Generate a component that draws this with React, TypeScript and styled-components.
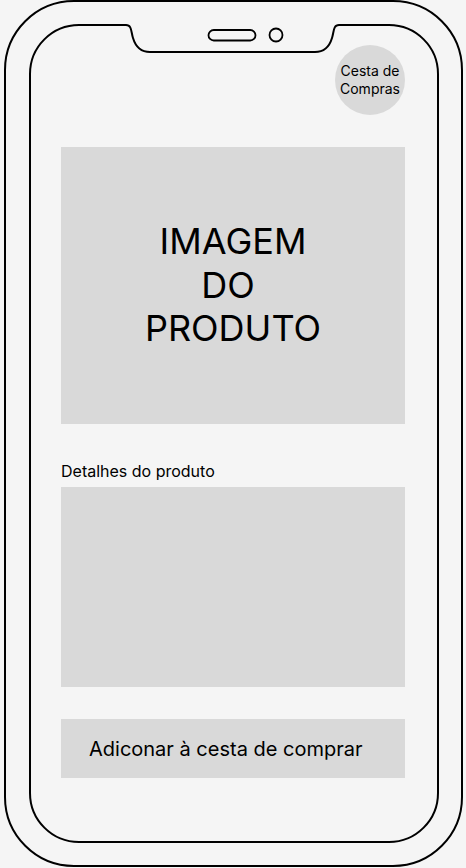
import React from 'react';
import styled, { createGlobalStyle } from 'styled-components';

const GlobalStyle = createGlobalStyle`
  html, body {
    margin: 0;
    padding: 0;
    background: #f5f5f5;
  }
  body {
    font-family: Inter, "Noto Sans", "Liberation Sans", sans-serif;
    color: #000000;
  }
`;

const Screen = styled.div`
  position: relative;
  width: 466px;
  height: 868px;
  overflow: hidden;
`;

const PhoneBody = styled.div`
  box-sizing: border-box;
  width: 459px;
  height: 867px;
  margin-left: 4px;
  border: 2px solid #000;
  border-radius: 70px;
  padding: 22px 0 0 23px;
`;

const Display = styled.div`
  box-sizing: border-box;
  width: 410px;
  height: 819px;
  border: 2px solid #000;
  border-radius: 50px;
  padding: 19px 32px 0 30px;
  display: flex;
  flex-direction: column;
`;

const Notch = styled.svg`
  position: absolute;
  left: 0;
  top: 0;
  pointer-events: none;
`;

const Header = styled.div`
  display: flex;
  justify-content: flex-end;
`;

const CartBadge = styled.div`
  width: 70px;
  height: 70px;
  border-radius: 50%;
  background: #d9d9d9;
  display: flex;
  align-items: center;
  justify-content: center;
  text-align: center;
  font-size: 14px;
  line-height: 18px;
`;

const Block = styled.div<{ $height: number; $gap: number }>`
  height: ${(p) => p.$height}px;
  margin-top: ${(p) => p.$gap}px;
  background: #d9d9d9;
`;

const ImageBox = styled(Block)`
  display: flex;
  align-items: center;
  justify-content: center;
  text-align: center;
  font-size: 36px;
  line-height: 43.5px;
  white-space: pre;
`;

const Label = styled.div`
  margin-top: 38px;
  font-size: 16px;
  line-height: 18px;
`;

const AddButton = styled(Block)`
  display: flex;
  align-items: center;
  padding-left: 28px;
  font-size: 20px;
`;

export default function App() {
  return (
    <>
      <GlobalStyle />
      <Screen>
        <PhoneBody>
          <Display>
            <Header>
              <CartBadge>
                Cesta de
                <br />
                Compras
              </CartBadge>
            </Header>
            <ImageBox $height={277} $gap={32}>
              {'IMAGEM\nDO \nPRODUTO'}
            </ImageBox>
            <Label>Detalhes do produto</Label>
            <Block $height={200} $gap={7} />
            <AddButton $height={59} $gap={32}>
              Adiconar à cesta de comprar
            </AddButton>
          </Display>
        </PhoneBody>
        <Notch width="466" height="60" viewBox="0 0 466 60">
          <rect x="122" y="22" width="222" height="4" fill="#f5f5f5" />
          <path
            d="M118 25 H126 C132 25 131 32 133 38 C136 48 142 52 150 52 H315 C323 52 329 48 332 38 C334 32 333 25 339 25 H346"
            fill="none"
            stroke="#000"
            strokeWidth="2"
          />
          <rect x="208.5" y="30" width="47" height="10.5" rx="5.25" fill="none" stroke="#000" strokeWidth="1.8" />
          <circle cx="276" cy="35" r="6.5" fill="none" stroke="#000" strokeWidth="1.8" />
        </Notch>
      </Screen>
    </>
  );
}
